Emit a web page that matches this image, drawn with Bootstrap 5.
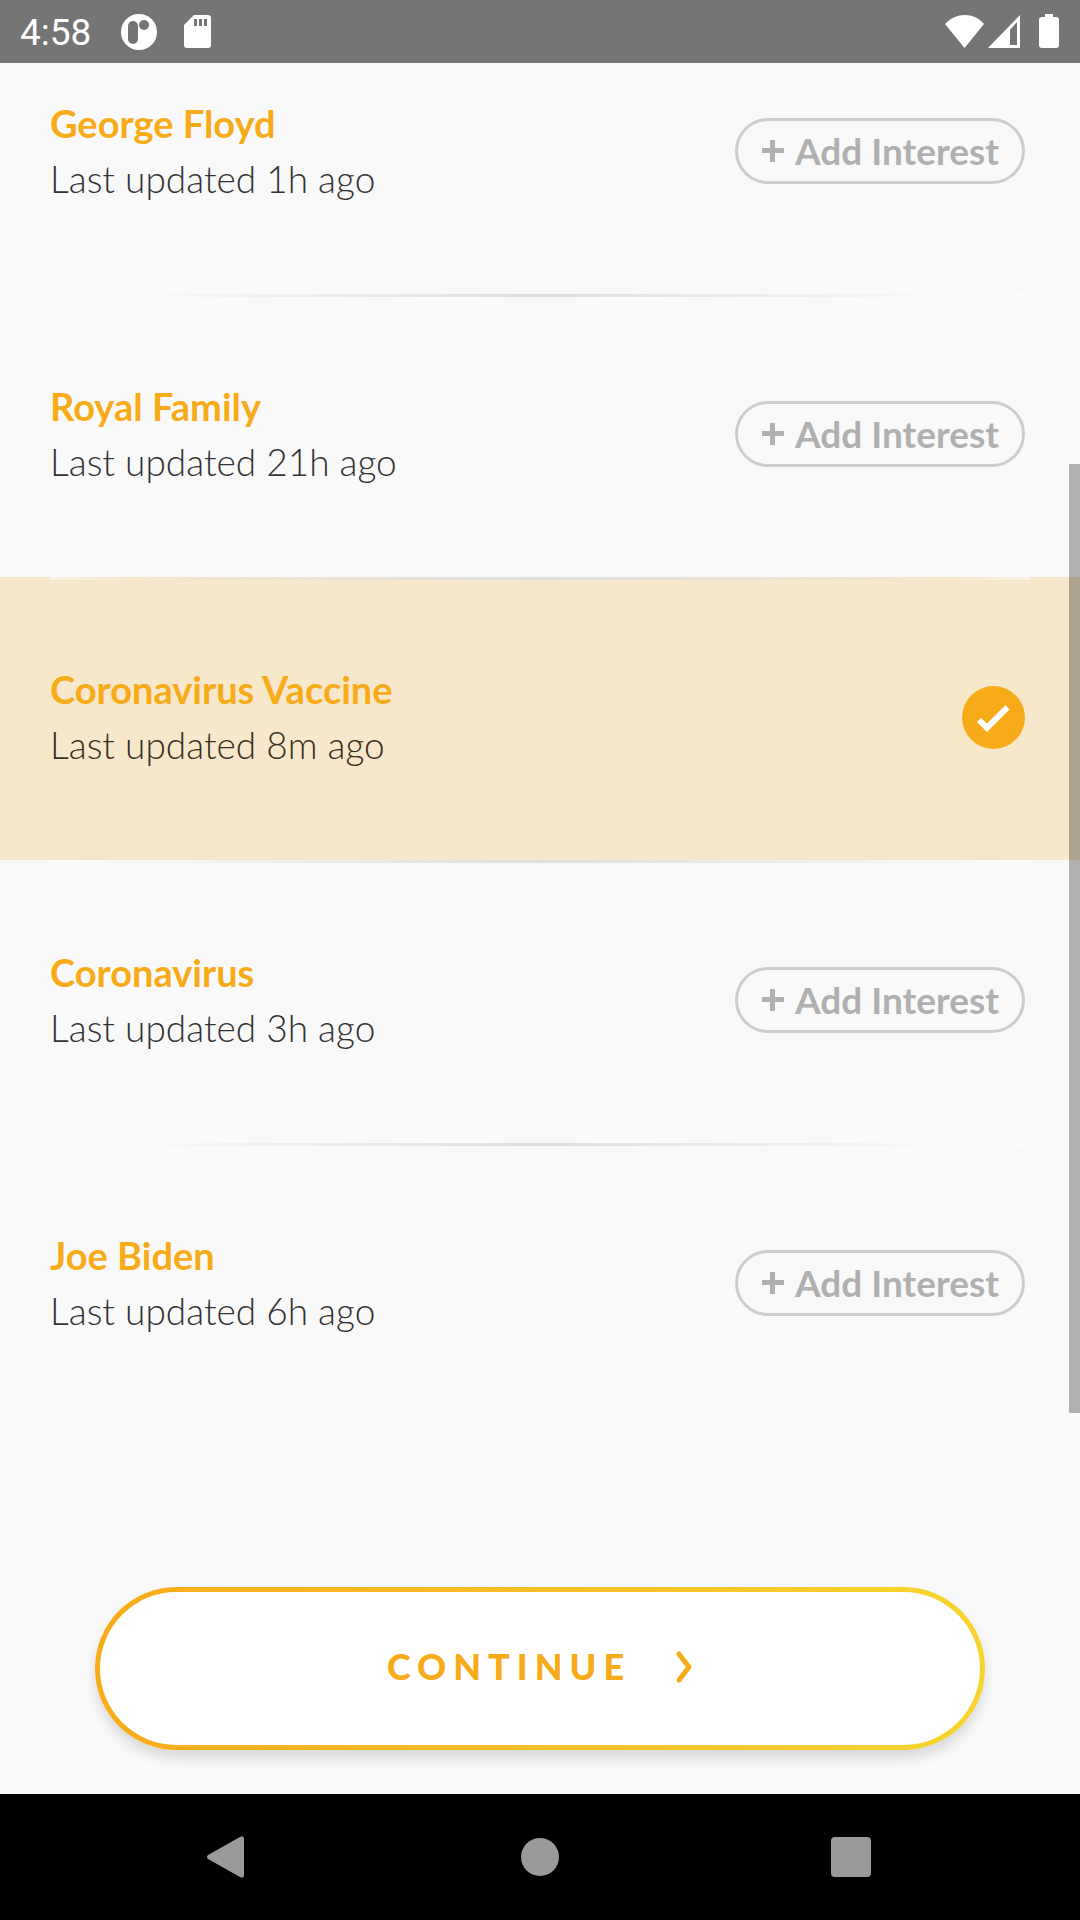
<!DOCTYPE html>
<html lang="en">
<head>
<meta charset="utf-8">
<meta name="viewport" content="width=device-width, initial-scale=1">
<title>Choose your interests</title>
<link href="https://cdn.jsdelivr.net/npm/bootstrap@5.3.0/dist/css/bootstrap.min.css" rel="stylesheet">
<style>
  :root { --accent: #f8ab18; --accent-end: #f7d42f; --surface: #f9f9f9; }
  body { background: var(--surface); font-family: Lato, "Open Sans", sans-serif; font-size: 37px; }
  svg { display: block; }

  .status-bar { height: 63px; background: #757575; color: #fff; padding: 0 20px; font-family: Roboto, sans-serif; }
  .status-time { line-height: 60px; padding-top: 3px; }
  .status-left { gap: 28px; }
  .status-icons { gap: 27px; }

  .interest-item { padding: 0 55px 88px 50px; }
  .interest-item:first-child { padding-top: 33px; }
  .interest-item + .interest-item::before {
    content: ""; display: block; height: 3px; margin: 0 -5px 82px 0;
    background: linear-gradient(90deg, #ffffff80, #d9d9d900 8%, #dedede 50%, #d9d9d900 92%, #ffffff80);
  }
  .interest-item.is-selected { background: #f7e8cb; }
  .interest-name { color: var(--accent); font-size: 38px; font-weight: 700; line-height: 55px; }
  .interest-time { color: #333; font-weight: 300; line-height: 55px; }
  .is-selected .interest-time { color: #3a2f1c; }

  .btn-interest {
    --bs-btn-color: #b0b0b0; --bs-btn-border-color: #cdcdcd; --bs-btn-border-width: 3px;
    --bs-btn-hover-color: #909090; --bs-btn-hover-border-color: #b0b0b0;
    --bs-btn-font-size: 37px; --bs-btn-font-weight: 700; --bs-btn-line-height: 60px;
    --bs-btn-padding-y: 0px; --bs-btn-padding-x: 23px;
    gap: 10px;
  }
  .scroll-thumb { top: 401px; width: 11px; height: 949px; background: rgba(0, 0, 0, .29); }

  .continue-wrap { padding: 0 95px 44px; }
  .btn-continue {
    --bs-btn-color: var(--accent); --bs-btn-hover-color: var(--accent);
    --bs-btn-font-size: 36px; --bs-btn-font-weight: 900; --bs-btn-line-height: 55px;
    --bs-btn-border-width: 5px;
    padding-top: 47px; padding-bottom: 51px;
    gap: 44px; letter-spacing: 7px;
    box-shadow: 0 8px 12px rgba(0, 0, 0, .13);
  }
  .btn-continue, .btn-continue:hover {
    border-color: transparent;
    background: linear-gradient(#fff, #fff) padding-box,
                linear-gradient(90deg, var(--accent), var(--accent-end)) border-box;
  }

  .nav-keys { height: 126px; background: #000; padding: 0 180px; }
  .nav-keys .btn { --bs-btn-padding-x: 15px; --bs-btn-padding-y: 15px; --bs-btn-border-width: 0px; }
</style>
</head>
<body>
<div class="d-flex flex-column min-vh-100">
  <header class="status-bar d-flex align-items-center justify-content-between">
    <div class="status-left d-flex align-items-center">
      <span class="status-time">4:58</span>
      <div class="status-icons d-flex align-items-center">
        <svg width="38" height="38" viewBox="0 0 38 38" aria-hidden="true">
          <circle cx="20" cy="19" r="18" fill="#fff"/>
          <rect x="9" y="8" width="10" height="23" rx="5" fill="#757575"/>
          <circle cx="25" cy="12" r="5" fill="#757575"/>
        </svg>
        <svg width="28" height="34" viewBox="0 0 28 34" aria-hidden="true">
          <path d="M10 0h14a3 3 0 0 1 3 3v27a3 3 0 0 1-3 3H3a3 3 0 0 1-3-3V10z" fill="#fff"/>
          <path d="M10 4h3v7h-3zM15 4h3v7h-3zM20 4h3v7h-3z" fill="#757575"/>
        </svg>
      </div>
    </div>
    <svg width="115" height="36" viewBox="0 0 115 36" aria-hidden="true">
      <path d="M0 10C11-2 29-2 39 10L19.500 34z" fill="#fff"/>
      <path d="M43 34L75 1v33zM65 16v15h7V8z" fill="#fff" fill-rule="evenodd"/>
      <path d="M100 0h8v3h3a3 3 0 0 1 3 3v25a3 3 0 0 1-3 3H97a3 3 0 0 1-3-3V6a3 3 0 0 1 3-3h3z" fill="#fff"/>
    </svg>
  </header>

  <main class="position-relative flex-grow-1 d-flex flex-column justify-content-between">
    <ul class="list-unstyled mb-0">
      <li class="interest-item">
        <div class="d-flex align-items-center justify-content-between">
          <div><h2 class="interest-name mb-0">George Floyd</h2><p class="interest-time mb-0">Last updated 1h ago</p></div>
          <button type="button" class="btn btn-interest rounded-pill d-flex align-items-center">
            <svg width="24" height="24" viewBox="0 0 24 24" aria-hidden="true"><path d="M9 1h5v8h9v5h-9v9H9v-9H1V9h8z" fill="currentColor"/></svg>Add Interest</button>
        </div>
      </li>
      <li class="interest-item">
        <div class="d-flex align-items-center justify-content-between">
          <div><h2 class="interest-name mb-0">Royal Family</h2><p class="interest-time mb-0">Last updated 21h ago</p></div>
          <button type="button" class="btn btn-interest rounded-pill d-flex align-items-center">
            <svg width="24" height="24" viewBox="0 0 24 24" aria-hidden="true"><path d="M9 1h5v8h9v5h-9v9H9v-9H1V9h8z" fill="currentColor"/></svg>Add Interest</button>
        </div>
      </li>
      <li class="interest-item is-selected">
        <div class="d-flex align-items-center justify-content-between">
          <div><h2 class="interest-name mb-0">Coronavirus Vaccine</h2><p class="interest-time mb-0">Last updated 8m ago</p></div>
          <button type="button" class="btn border-0 p-0 rounded-circle" aria-pressed="true" aria-label="Remove interest">
            <svg width="63" height="63" viewBox="0 0 63 63" aria-hidden="true"><circle cx="31.500" cy="31.500" r="31.500" fill="#f8ab18"/><path d="M15 36l4-4 6 5.500L43.500 19l4 4.500L25 46z" fill="#fff"/></svg></button>
        </div>
      </li>
      <li class="interest-item">
        <div class="d-flex align-items-center justify-content-between">
          <div><h2 class="interest-name mb-0">Coronavirus</h2><p class="interest-time mb-0">Last updated 3h ago</p></div>
          <button type="button" class="btn btn-interest rounded-pill d-flex align-items-center">
            <svg width="24" height="24" viewBox="0 0 24 24" aria-hidden="true"><path d="M9 1h5v8h9v5h-9v9H9v-9H1V9h8z" fill="currentColor"/></svg>Add Interest</button>
        </div>
      </li>
      <li class="interest-item">
        <div class="d-flex align-items-center justify-content-between">
          <div><h2 class="interest-name mb-0">Joe Biden</h2><p class="interest-time mb-0">Last updated 6h ago</p></div>
          <button type="button" class="btn btn-interest rounded-pill d-flex align-items-center">
            <svg width="24" height="24" viewBox="0 0 24 24" aria-hidden="true"><path d="M9 1h5v8h9v5h-9v9H9v-9H1V9h8z" fill="currentColor"/></svg>Add Interest</button>
        </div>
      </li>
    </ul>
    <div class="continue-wrap">
      <button type="button" class="btn btn-continue rounded-pill w-100 d-flex align-items-center justify-content-center">CONTINUE
        <svg width="18" height="34" viewBox="0 0 18 34" fill="none" stroke="currentColor" stroke-width="5" stroke-linecap="round" stroke-linejoin="round" aria-hidden="true"><path d="M4 4l10 13L4 30"/></svg></button>
    </div>
    <div class="scroll-thumb position-absolute end-0"></div>
  </main>

  <nav class="nav-keys d-flex align-items-center justify-content-between" aria-label="System">
    <button type="button" class="btn" aria-label="Back"><svg width="60" height="44" viewBox="0 0 60 44" aria-hidden="true"><path d="M13 20L45 2q4-2 4 2v36q0 4-4 2L13 24q-2-2 0-4z" fill="#9a9a9a"/></svg></button>
    <button type="button" class="btn" aria-label="Home"><svg width="40" height="40" viewBox="0 0 40 40" aria-hidden="true"><circle cx="20" cy="20" r="19" fill="#9a9a9a"/></svg></button>
    <button type="button" class="btn" aria-label="Overview"><svg width="60" height="40" viewBox="0 0 60 40" aria-hidden="true"><rect x="6" width="40" height="40" rx="4" fill="#9a9a9a"/></svg></button>
  </nav>
</div>
<script src="https://cdn.jsdelivr.net/npm/bootstrap@5.3.0/dist/js/bootstrap.bundle.min.js"></script>
</body>
</html>
